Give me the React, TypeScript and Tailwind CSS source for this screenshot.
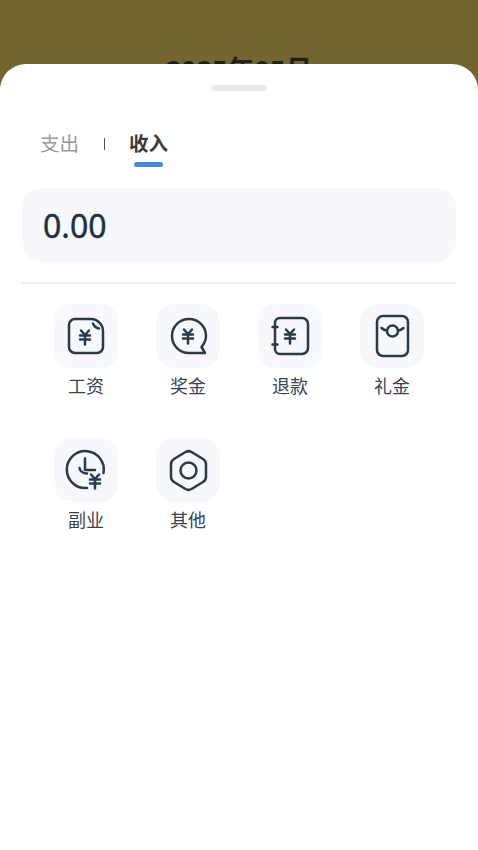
import type { ReactNode } from "react";

const cjk = "font-['Noto_Sans','Noto_Sans_CJK_SC',sans-serif]";

function Yen({ x, y }: { x: number; y: number }) {
  return (
    <g transform={`translate(${x} ${y})`}>
      <path d="M-4 -6.500 L0 -2 L4 -6.500 M-5 -1.500 H5 M-5 2.500 H5 M0 -2 V7.500" />
    </g>
  );
}

const categories: { name: string; icon: ReactNode }[] = [
  {
    name: "工资",
    icon: (
      <>
        <path d="M21 15 H37 C43.500 15 49 20.500 49 27 V43 a6 6 0 0 1 -6 6 H21 a6 6 0 0 1 -6 -6 V21 a6 6 0 0 1 6 -6 Z" />
        <path d="M39 19.500 C40 22 42 24 45 24.500" />
        <Yen x={31} y={33} />
      </>
    ),
  },
  {
    name: "奖金",
    icon: (
      <>
        <path d="M49 49 H33 A17 17 0 1 1 50 32 C50 36 48 40 45.500 43 Z" />
        <Yen x={32} y={32} />
      </>
    ),
  },
  {
    name: "退款",
    icon: (
      <>
        <path d="M17 19 a5 5 0 0 1 5 -5 H44 a6 6 0 0 1 6 6 V44 a6 6 0 0 1 -6 6 H22 a5 5 0 0 1 -5 -5 V19" />
        <path d="M14.500 23 H19.500 M14.500 40.500 H19.500" />
        <Yen x={32} y={32} />
      </>
    ),
  },
  {
    name: "礼金",
    icon: (
      <>
        <rect x="17" y="12" width="31" height="40" rx="6" />
        <circle cx="32.500" cy="27" r="5.500" />
        <path d="M21.500 24 C23 25.500 25 26.500 27 26.500 M38 26.500 C40 26.500 42 25.500 43.500 24" />
      </>
    ),
  },
  {
    name: "副业",
    icon: (
      <>
        <path d="M33 50 A18.500 18.500 0 1 1 49.500 35" />
        <path d="M31 20.500 V32 H41" />
        <path d="M25.500 30 C26 33 29 35.500 33 35.500" />
        <Yen x={41} y={43} />
      </>
    ),
  },
  {
    name: "其他",
    icon: (
      <>
        <path d="M29.500 14 a6 6 0 0 1 6 0 L47 21 a6 6 0 0 1 3 5 V39 a6 6 0 0 1 -3 5 L35.500 51 a6 6 0 0 1 -6 0 L18 44 a6 6 0 0 1 -3 -5 V26 a6 6 0 0 1 3 -5 Z" />
        <circle cx="32.500" cy="32.500" r="8" />
      </>
    ),
  },
];

function Category({ name, icon }: { name: string; icon: ReactNode }) {
  return (
    <div className="flex flex-col items-center h-[134px]">
      <div className="w-16 h-16 rounded-[18px] bg-[#f7f8fc]">
        <svg
          viewBox="0 0 64 64"
          className="w-16 h-16 text-[#2b3a48]"
          fill="none"
          stroke="currentColor"
          strokeWidth="2.5"
          strokeLinecap="round"
          strokeLinejoin="round"
        >
          {icon}
        </svg>
      </div>
      <span className="mt-[5px] text-[18px] leading-[26px] text-[#3a4450]">{name}</span>
    </div>
  );
}

export default function App() {
  return (
    <div className={`relative w-[478px] h-[850px] overflow-hidden bg-[#746430] ${cjk}`}>
      <div className="pt-[50px] text-center text-[27px] leading-[40px] font-bold text-[#1f1f1f]">
        2025年05月
      </div>

      <div className="absolute inset-x-0 top-16 bottom-0 rounded-t-[26px] bg-white flex flex-col">
        <div className="self-center mt-[21px] w-[54px] h-[6px] rounded-[2px] bg-[#e9e9e9]" />

        <div className="flex items-center mt-[39px] pl-10 h-7">
          <span className="text-[19.500px] leading-7 text-[#999999]">支出</span>
          <span className="ml-[25px] w-px h-3 bg-[#555555]" />
          <div className="relative ml-6">
            <span className="text-[19.500px] leading-7 font-bold text-[#3a3a3a]">收入</span>
            <div className="absolute left-[5px] top-[32px] w-[29px] h-[5px] rounded-full bg-[#4a8ad8]" />
          </div>
        </div>

        <div className="mx-[22px] mt-[30px] h-[74px] rounded-[20px] bg-[#f7f8fc] flex items-center pl-[21px] pt-[2px]">
          <span className="text-[32px] leading-10 [-webkit-text-stroke:0.4px_#22303e] text-[#22303e]">0.00</span>
        </div>

        <div className="mx-[22px] mt-[20px] h-[2px] bg-[#eeeeee]" />

        <div className="grid grid-cols-4 mt-5 mx-[35px]">
          {categories.map((c) => (
            <Category key={c.name} name={c.name} icon={c.icon} />
          ))}
        </div>
      </div>
    </div>
  );
}
